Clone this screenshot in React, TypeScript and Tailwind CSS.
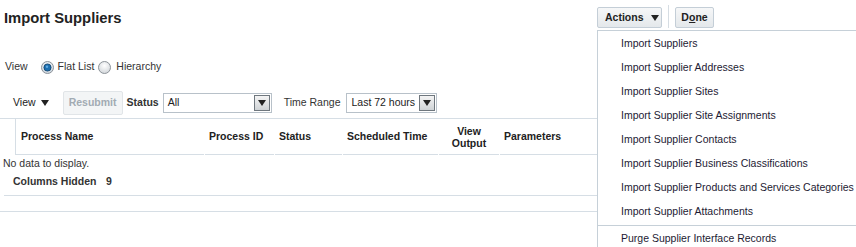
import React from 'react';

const menuItems = [
  'Import Suppliers',
  'Import Supplier Addresses',
  'Import Supplier Sites',
  'Import Supplier Site Assignments',
  'Import Supplier Contacts',
  'Import Supplier Business Classifications',
  'Import Supplier Products and Services Categories',
  'Import Supplier Attachments',
];

function Radio({ checked }: { checked?: boolean }) {
  return (
    <svg width="13" height="13" viewBox="0 0 13 13" className="shrink-0">
      <defs>
        <radialGradient id={checked ? 'rc' : 'ru'} cx="50%" cy="35%" r="65%">
          <stop offset="0%" stopColor="#ffffff" />
          <stop offset="100%" stopColor={checked ? '#c9d3dc' : '#d2d6da'} />
        </radialGradient>
      </defs>
      <circle cx="6.5" cy="6.5" r="6" fill={`url(#${checked ? 'rc' : 'ru'})`} stroke="#8d9399" strokeWidth="1" />
      {checked && (
        <>
          <circle cx="6.5" cy="6.5" r="3.6" fill="#1c6fb0" stroke="#0d3d66" strokeWidth="0.8" />
          <circle cx="6" cy="5.8" r="1.2" fill="#5ea9e0" />
        </>
      )}
    </svg>
  );
}

function Caret() {
  return (
    <svg width="8" height="6" viewBox="0 0 8 6">
      <path d="M0 0 L8 0 L4 6 Z" fill="#222" />
    </svg>
  );
}

function Select({ value, width }: { value: string; width: string }) {
  return (
    <div className={`flex items-center h-[20px] border border-[#b8c1c9] bg-white ${width}`}>
      <span className="flex-1 pl-[4px] text-[#222]">{value}</span>
      <div className="flex items-center justify-center w-[16px] h-[16px] mr-[1px] border border-[#6f777e] bg-gradient-to-b from-[#f4f4f4] to-[#cfd3d6]">
        <Caret />
      </div>
    </div>
  );
}

export default function App() {
  return (
    <div className="relative w-[856px] h-[247px] bg-white overflow-hidden whitespace-nowrap text-[10.5px] text-[#333] font-['Liberation_Sans',Arial,sans-serif]">
      {/* Header */}
      <div className="flex items-start h-[30px]">
        <h1 className="pl-[4px] pt-[9px] text-[14.8px] font-bold text-[#222] leading-[18px]">Import Suppliers</h1>
        <div className="ml-auto mr-[142px] mt-[5px] flex items-center">
          <button className="mt-[2px] flex items-center gap-[7px] h-[21px] w-[65px] pl-[7px] border border-[#c4ced7] rounded-[2px] bg-gradient-to-b from-[#f6f7f8] to-[#e4e8eb] font-bold text-[#222]">
            Actions <Caret />
          </button>
          <div className="mx-[6px] w-px h-[23px] bg-[#d6dde3]" />
          <button className="mt-[2px] flex items-center justify-center h-[21px] w-[39px] border border-[#c4ced7] rounded-[2px] bg-gradient-to-b from-[#f6f7f8] to-[#e4e8eb] font-bold text-[#222]">
            D<span className="underline">o</span>ne
          </button>
        </div>
      </div>

      {/* View radios */}
      <div className="mt-[27px] flex items-center h-[20px] pl-[5px]">
        <span className="mr-[13px]">View</span>
        <Radio checked />
        <span className="ml-[4px] mr-[4px]">Flat List</span>
        <Radio />
        <span className="ml-[5px]">Hierarchy</span>
      </div>

      {/* Toolbar */}
      <div className="mt-[14px] flex items-center h-[24px] pl-[13px]">
        <span className="flex items-center gap-[5px] text-[#222]">
          View <Caret />
        </span>
        <div className="ml-[14px] flex items-center justify-center w-[60px] h-[24px] bg-[#f3f5f6] border border-[#e1e5e8] rounded-[2px] font-bold text-[#a2abb3]">
          Resubmit
        </div>
        <span className="ml-[4px] mr-[4px] font-bold text-[#333]">Status</span>
        <Select value="All" width="w-[109px]" />
        <span className="ml-[12px] mr-[6px] text-[#333]">Time Range</span>
        <Select value="Last 72 hours" width="w-[91px]" />
      </div>

      {/* Table header */}
      <div className="mt-[3px] border-t border-[#d6dee5] flex h-[37px] font-bold text-[#222]">
        <div className="w-[16px] border-r border-[#d6dee5]" />
        <div className="flex flex-1 gap-px">
          <div className="w-[188px] flex items-center pl-[5px] border-b border-[#d6dee5]">Process Name</div>
          <div className="w-[69px] flex items-center pl-[4px] border-b border-[#d6dee5]">Process ID</div>
          <div className="w-[67px] flex items-center pl-[4px] border-b border-[#d6dee5]">Status</div>
          <div className="w-[95px] flex items-center pl-[4px] border-b border-[#d6dee5]">Scheduled Time</div>
          <div className="w-[60px] flex items-center justify-center text-center leading-[12px] border-b border-[#d6dee5]">
            View
            <br />
            Output
          </div>
          <div className="flex-1 flex items-center pl-[4px] border-b border-[#d6dee5]">Parameters</div>
        </div>
      </div>

      {/* Body */}
      <div className="pl-[3px] h-[17px] flex items-center">No data to display.</div>
      <div className="pl-[13px] h-[19px] flex items-center font-bold text-[#333]">
        <span className="w-[93px]">Columns Hidden</span>
        <span>9</span>
      </div>
      <div className="mt-[4px] ml-[4px] border-t border-[#d6dee5]" />
      <div className="mt-[15px] border-t border-[#d6dee5]" />

      {/* Actions menu */}
      <div className="absolute left-[597px] top-[30px] right-0 bottom-0 pt-[1px] bg-white border-l border-t border-[#c6d0d8]">
        {menuItems.map((item) => (
          <div key={item} className="h-[24px] flex items-center pl-[23px] text-[#1d1a33]">
            {item}
          </div>
        ))}
        <div className="mt-[1px] border-t border-[#c6d0d8]" />
        <div className="h-[25px] flex items-center pl-[23px] text-[#1d1a33]">Purge Supplier Interface Records</div>
      </div>
    </div>
  );
}
